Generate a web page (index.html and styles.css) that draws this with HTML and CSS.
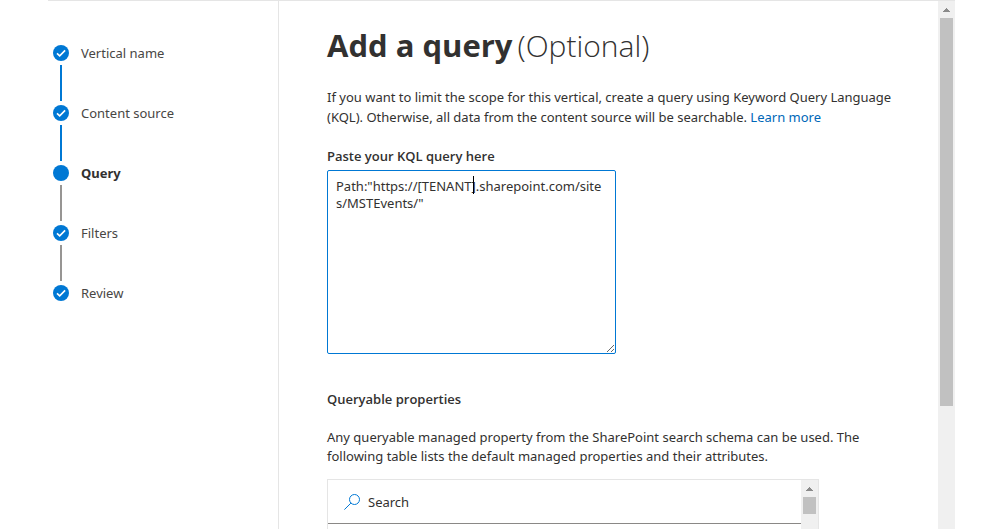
FILE: index.html
```html
<!DOCTYPE html>
<html lang="en">
  <head>
    <meta charset="utf-8">
    <meta name="viewport" content="width=device-width, initial-scale=1">
    <title>Add a query</title>
    <link rel="stylesheet" href="styles.css">
  </head>
  <body>
    <svg class="defs" width="0" height="0" aria-hidden="true">
      <symbol id="check" viewBox="0 0 16 16">
        <circle cx="8" cy="8" r="8" fill="#0078d4"/>
        <path d="M4 8.300l2.700 2.600 5.400-5.500" fill="none" stroke="#fff" stroke-width="1.600"/>
      </symbol>
      <symbol id="dot" viewBox="0 0 16 16">
        <circle cx="8" cy="8" r="8" fill="#0078d4"/>
      </symbol>
      <symbol id="arrow" viewBox="0 0 7 4">
        <path d="M3 0h1v1h1v1h1v1h1v1H0V3h1V2h1V1h1z" fill="#8b8b8b"/>
      </symbol>
    </svg>

    <div class="wizard">
      <nav class="steps">
        <ol>
          <li class="step done"><svg class="mark"><use href="#check"/></svg>Vertical name</li>
          <li class="step done"><svg class="mark"><use href="#check"/></svg>Content source</li>
          <li class="step current"><svg class="mark"><use href="#dot"/></svg>Query</li>
          <li class="step"><svg class="mark"><use href="#check"/></svg>Filters</li>
          <li class="step"><svg class="mark"><use href="#check"/></svg>Review</li>
        </ol>
      </nav>

      <main class="content">
        <h1>Add a query <span class="optional">(Optional)</span></h1>
        <p class="intro">If you want to limit the scope for this vertical, create a query using Keyword Query Language (KQL). Otherwise, all data from the content source will be searchable. <a href="#">Learn more</a></p>

        <label class="label" for="kql">Paste your KQL query here</label>
        <div class="editor">
          <textarea id="kql" spellcheck="false">Path:"https://[TENANT].sharepoint.com/sites/MSTEvents/"</textarea>
          <span class="caret"></span>
        </div>

        <h2>Queryable properties</h2>
        <p class="help">Any queryable managed property from the SharePoint search schema can be used. The following table lists the default managed properties and their attributes.</p>

        <div class="properties">
          <div class="list">
            <div class="search">
              <svg class="lens" viewBox="0 0 16 16" aria-hidden="true">
                <path d="M10.500 .5a5 5 0 1 1 0 10 5 5 0 0 1 0-10zM6.900 9.100L.4 15.600" fill="none" stroke="#0078d4"/>
              </svg>
              <input type="text" placeholder="Search" aria-label="Search">
            </div>
          </div>
          <div class="scrollbar">
            <svg class="arrow"><use href="#arrow"/></svg>
            <div class="thumb small"></div>
          </div>
        </div>
      </main>

      <div class="scrollbar">
        <svg class="arrow"><use href="#arrow"/></svg>
        <div class="thumb"></div>
      </div>
    </div>
  </body>
</html>
```

FILE: styles.css
```css
* {
  box-sizing: border-box;
}
body {
  margin: 0;
  background: #fff;
  color: #323130;
  font-family: "Noto Sans", "Open Sans", sans-serif;
  font-size: 13px;
  line-height: 20px;
}
.defs {
  position: absolute;
}
.wizard {
  display: flex;
  height: 100vh;
  margin: 0 46px 0 48px;
  border-top: 1px solid #e5e5e5;
  overflow: hidden;
}

/* steps */
.steps {
  flex: none;
  width: 231px;
  padding: 42px 5px;
  border-right: 1px solid #e5e5e5;
}
.steps ol {
  margin: 0;
  padding: 0;
  list-style: none;
}
.step {
  display: grid;
  grid-template-columns: 16px 1fr;
  grid-template-rows: 20px 40px;
  column-gap: 12px;
  align-items: center;
  color: #484644;
}
.step .mark {
  width: 16px;
  height: 16px;
}
.step::after {
  content: "";
  width: 2px;
  height: 36px;
  background: #979593;
  justify-self: center;
}
.step.done::after {
  background: #0078d4;
}
.step:last-child::after {
  display: none;
}
.step.current {
  color: #323130;
  font-weight: 700;
}

/* content */
.content {
  flex: 1;
  min-width: 0;
  padding: 24px 32px 0 48px;
  overflow: hidden;
}
h1 {
  display: flex;
  align-items: baseline;
  gap: 5px;
  margin: 0;
  font-family: "Open Sans", "Noto Sans", sans-serif;
  font-size: 31px;
  line-height: 40px;
  font-weight: 700;
}
.optional {
  font-size: 30px;
  font-weight: 300;
}
p {
  margin: 0;
}
.intro {
  margin-top: 21px;
}
a {
  color: #0067b8;
  text-decoration: none;
}
.label {
  display: block;
  margin-top: 19px;
  font-family: "Open Sans", "Noto Sans", sans-serif;
  font-weight: 600;
}
.editor {
  position: relative;
  width: 289px;
  max-width: 100%;
  margin-top: 4px;
}
.editor textarea {
  display: block;
  width: 100%;
  height: 184px;
  padding: 7px 8px;
  border: 1px solid #0078d4;
  border-radius: 2px;
  outline: none;
  color: #323130;
  font: inherit;
  line-height: 17px;
  word-break: break-all;
}
.caret {
  position: absolute;
  left: 146px;
  top: 6px;
  width: 1px;
  height: 18px;
  background: #000;
}
h2 {
  margin: 35px 0 0;
  font-family: "Open Sans", "Noto Sans", sans-serif;
  font-size: 13px;
  line-height: 20px;
  font-weight: 600;
}
.help {
  max-width: 560px;
  margin-top: 19px;
  line-height: 19px;
}
.properties {
  display: flex;
  max-width: 492px;
  height: 240px;
  margin-top: 13px;
  border: 1px solid #e5e5e5;
}
.list {
  flex: 1;
}
.search {
  display: flex;
  align-items: center;
  gap: 8px;
  height: 44px;
  padding-left: 16px;
  border-bottom: 1px solid #8a8886;
}
.lens {
  width: 16px;
  height: 16px;
}
.search input {
  flex: 1;
  padding: 0;
  border: 0;
  outline: none;
  font: inherit;
}
.search input::placeholder {
  color: #323130;
}

/* scrollbars */
.scrollbar {
  flex: none;
  display: flex;
  flex-direction: column;
  align-items: center;
  width: 17px;
  background: #f0f0f0;
}
.scrollbar .arrow {
  width: 7px;
  height: 4px;
  margin: 7px 0 6px;
}
.thumb {
  width: 13px;
  height: 388px;
  background: #c1c1c1;
}
.thumb.small {
  height: 17px;
}
```
